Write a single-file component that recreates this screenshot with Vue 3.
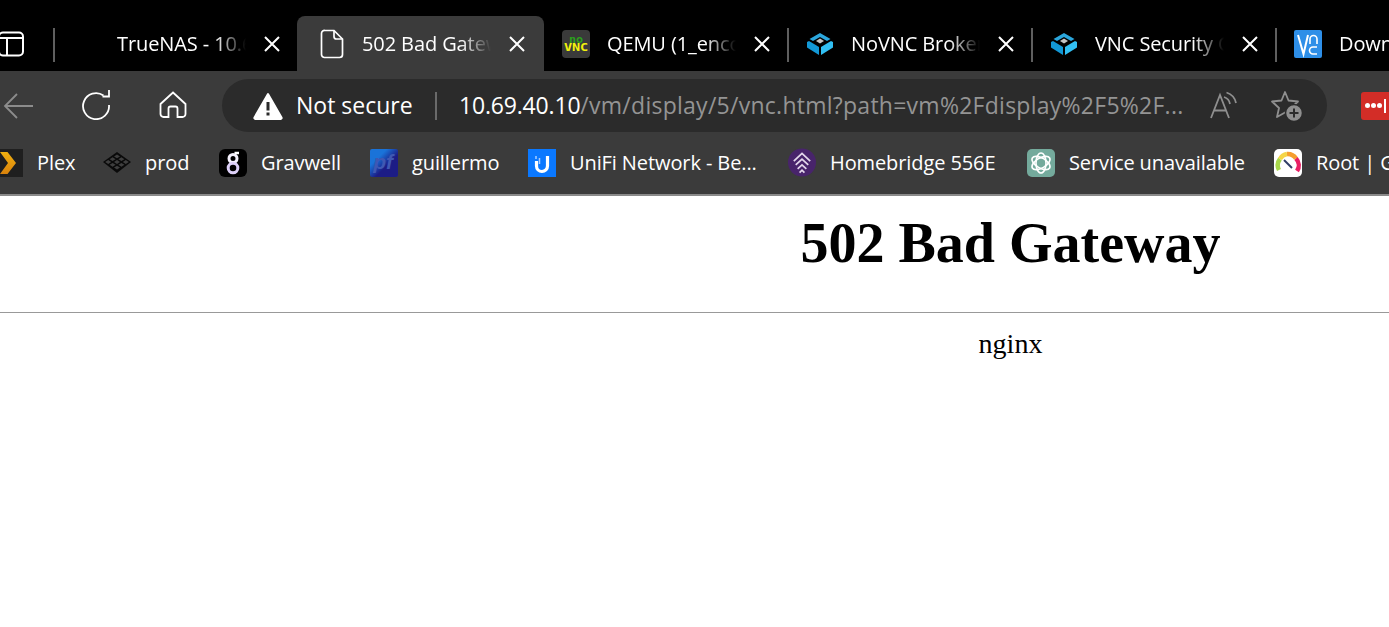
<script setup>
const tabs = [
  { key: 'truenas', title: 'TrueNAS - 10.69.40.10', icon: '', sep: true },
  { key: 'bad', title: '502 Bad Gateway', icon: 'doc', active: true },
  { key: 'qemu', title: 'QEMU (1_encoder)', icon: 'novnc' },
  { key: 'novnc', title: 'NoVNC Broken', icon: 'tn', sep: true },
  { key: 'sec', title: 'VNC Security Options', icon: 'tn', sep: true },
  { key: 'down', title: 'Downloads', icon: 'vc', sep: true },
]
const marks = [
  { label: 'Plex', icon: 'plex', width: 108 },
  { label: 'prod', icon: 'prod', width: 116 },
  { label: 'Gravwell', icon: 'grav', width: 151 },
  { label: 'guillermo', icon: 'pf', width: 158 },
  { label: 'UniFi Network - Be...', icon: 'unifi', width: 260 },
  { label: 'Homebridge 556E', icon: 'hb', width: 239 },
  { label: 'Service unavailable', icon: 'ai', width: 247 },
  { label: 'Root | Grafana', icon: 'root', width: 200 },
]
const prodCells = []
for (const i of [-1, 0, 1]) {
  for (const j of [-1, 0, 1]) {
    const cx = 14 + (i + j) * 4.4
    const cy = 13 + (i - j) * 2.8
    prodCells.push(`M${cx} ${cy - 1.9}L${cx + 3} ${cy}L${cx} ${cy + 1.9}L${cx - 3} ${cy}Z`)
  }
}
const prodPath = prodCells.join('')
</script>

<template>
  <div class="screen">
    <header class="chrome">
      <div class="tabstrip">
        <svg class="sidebar-ico" width="25" height="26" viewBox="0 0 25 26" fill="none" stroke="#fff" stroke-width="2">
          <rect x="-1" y="1.500" width="24" height="23" rx="4" />
          <path d="M-1 7H23M7 7V24" />
        </svg>
        <div v-for="t in tabs" :key="t.key" class="tab" :class="{ active: t.active, sep: t.sep }">
          <span class="fav">
            <svg v-if="t.icon === 'doc'" class="doc" width="24" height="30" viewBox="0 0 24 30" fill="none" stroke="#fff" stroke-width="1.700">
              <path d="M5 1.500H14L22.500 10V25.500A3 3 0 0 1 19.500 28.500H4.500A3 3 0 0 1 1.500 25.500V4.500A3 3 0 0 1 5 1.500Z" />
              <path d="M14 1.500V7.500A2.500 2.500 0 0 0 16.500 10H22.500" />
            </svg>
            <svg v-else-if="t.icon === 'novnc'" width="28" height="28" viewBox="0 0 28 28">
              <rect width="28" height="28" rx="4" fill="#3a3a3a" />
              <text x="7" y="12.500" class="nv nv-g" textLength="14" lengthAdjust="spacingAndGlyphs">no</text>
              <text x="2" y="21" class="nv nv-y" textLength="24" lengthAdjust="spacingAndGlyphs">VNC</text>
            </svg>
            <svg v-else-if="t.icon === 'tn'" width="28" height="28" viewBox="0 0 28 28">
              <path d="M14 3L24.500 9L21 11L14 7L7 11L3.500 9Z" fill="#2ba6dc" />
              <path d="M14 8.500L18 11L14 13.500L10 11Z" fill="#c4c4c4" />
              <path d="M1 12L3 11L13 17V25L1 17.500Z" fill="#1298d6" />
              <path d="M27 12L25 11L15 17V25L27 17.500Z" fill="#31bff3" />
            </svg>
            <svg v-else-if="t.icon === 'vc'" width="28" height="28" viewBox="0 0 28 28">
              <rect width="28" height="28" rx="2" fill="#2e8fe8" />
              <path d="M4 5L9.500 24L14 5" fill="none" stroke="#fff" stroke-width="2" />
              <path d="M16 14V9A3.500 3.500 0 0 1 23 9V14" fill="none" stroke="#fff" stroke-width="1.600" />
              <path d="M23 17H19A3.500 3.500 0 0 0 19 24H23" fill="none" stroke="#fff" stroke-width="1.600" />
            </svg>
          </span>
          <span class="tab-title">{{ t.title }}</span>
          <svg v-if="t.key !== 'down'" class="close" width="18" height="18" viewBox="0 0 18 18" stroke="#fff" stroke-width="2">
            <path d="M2 2L16 16M16 2L2 16" />
          </svg>
        </div>
      </div>

      <div class="toolbar">
        <svg class="tool back" width="30" height="28" viewBox="0 0 30 28" fill="none" stroke="#8c8c8c" stroke-width="1.800">
          <path d="M30 14H2M14 2L2 14L14 26" />
        </svg>
        <svg class="tool reload" width="30" height="30" viewBox="0 0 30 30" fill="none" stroke="#fff" stroke-width="1.800">
          <path d="M22.500 5.500A13 13 0 1 0 28 15" />
          <path d="M22 0V6.500H15.500" transform="translate(6 0)" />
        </svg>
        <svg class="tool home" width="28" height="28" viewBox="0 0 28 28" fill="none" stroke="#fff" stroke-width="1.800">
          <path d="M14 1.500L26.500 13V23A3 3 0 0 1 23.500 26H18.500V17.500A2 2 0 0 0 16.500 15.500H11.500A2 2 0 0 0 9.500 17.500V26H4.500A3 3 0 0 1 1.500 23V13Z" />
        </svg>
        <div class="omni">
          <svg class="warn" width="30" height="28" viewBox="0 0 30 28">
            <path d="M15 2L28.500 25.500A1 1 0 0 1 27.500 27H2.500A1 1 0 0 1 1.500 25.500Z" fill="#fff" stroke="#fff" stroke-linejoin="round" stroke-width="2" />
            <rect x="13.500" y="10" width="3" height="8.500" fill="#2b2b2b" />
            <rect x="13.500" y="20.500" width="3" height="3" fill="#2b2b2b" />
          </svg>
          <span class="secure">Not secure</span>
          <span class="omni-sep"></span>
          <span class="url"><b>10.69.40.10</b>/vm/display/5/vnc.html?path=vm%2Fdisplay%2F5%2F...</span>
          <svg class="aloud" width="28" height="30" viewBox="0 0 28 30" fill="none" stroke="#8f8f8f" stroke-width="1.800">
            <path d="M1 27L10 4L19 27M4 19.500H16" />
            <path d="M14 6A9 9 0 0 1 20 13M16.500 1.500A14 14 0 0 1 26 12" />
          </svg>
          <svg class="fav-add" width="32" height="32" viewBox="0 0 32 32" fill="none">
            <path d="M14 2L17.500 10.500L27 11.500L20 18L22 27L14 22.500L6 27L8 18L1 11.500L10.500 10.500Z" stroke="#8f8f8f" stroke-width="1.800" stroke-linejoin="round" />
            <circle cx="23" cy="23" r="8.500" fill="#8f8f8f" stroke="#2b2b2b" stroke-width="1.500" />
            <path d="M23 18.500V27.500M18.500 23H27.500" stroke="#2b2b2b" stroke-width="2" />
          </svg>
        </div>
        <div class="lastpass"><i></i><i></i><i></i><u></u></div>
      </div>

      <nav class="bookmarks">
        <div v-for="m in marks" :key="m.label" class="mark" :style="{ width: m.width + 'px' }">
          <span class="mark-ico">
            <svg v-if="m.icon === 'plex'" width="28" height="28" viewBox="0 0 28 28">
              <defs>
                <linearGradient id="plexg" x1="0" y1="0" x2="0" y2="1">
                  <stop offset="0" stop-color="#f0b010" />
                  <stop offset="1" stop-color="#d9820c" />
                </linearGradient>
              </defs>
              <rect width="28" height="28" fill="#1f1f1f" />
              <path d="M5 3H12.500L21 14L12.500 25H5L13 14Z" fill="url(#plexg)" />
            </svg>
            <svg v-else-if="m.icon === 'prod'" width="28" height="28" viewBox="0 0 28 28">
              <path d="M14 3L28 13L14 24L0 13Z" fill="#0a0a0a" />
              <path :d="prodPath" fill="#3f3f3f" />
            </svg>
            <svg v-else-if="m.icon === 'grav'" width="28" height="28" viewBox="0 0 28 28" fill="none">
              <rect width="28" height="28" rx="6" fill="#000" />
              <circle cx="14" cy="9.500" r="4" stroke="#f5f1fd" stroke-width="3" />
              <circle cx="14" cy="19" r="4.800" stroke="#dccff7" stroke-width="3" />
              <path d="M15.500 4H20" stroke="#fff" stroke-width="2.500" />
            </svg>
            <svg v-else-if="m.icon === 'pf'" width="28" height="28" viewBox="0 0 28 28">
              <defs>
                <linearGradient id="pfg" x1="0" y1="0" x2="1" y2="1">
                  <stop offset="0.300" stop-color="#1a73d9" />
                  <stop offset="0.600" stop-color="#1c1c85" />
                </linearGradient>
              </defs>
              <rect width="28" height="28" rx="2" fill="url(#pfg)" />
              <text x="13" y="20" class="pf">pf</text>
            </svg>
            <svg v-else-if="m.icon === 'unifi'" width="28" height="28" viewBox="0 0 28 28" fill="none">
              <rect width="28" height="28" fill="#0a78ff" />
              <path d="M8.500 12V17A5.500 5.500 0 0 0 19.500 17V7" stroke="#fff" stroke-width="3.200" />
              <path d="M8 7V10M11.500 9V15" stroke="#a9cdff" stroke-width="1.500" />
            </svg>
            <svg v-else-if="m.icon === 'hb'" width="29" height="29" viewBox="0 0 29 29" fill="none">
              <circle cx="14.500" cy="14.500" r="14.500" fill="#48246b" />
              <path d="M6 13L14.500 5L23 13M8 17L14.500 11L21 17M10 21L14.500 17L19 21M12 25L14.500 22.500L17 25" stroke="#e4d8ec" stroke-width="1.800" />
            </svg>
            <svg v-else-if="m.icon === 'ai'" width="28" height="28" viewBox="0 0 28 28" fill="none">
              <rect width="28" height="28" rx="5" fill="#74aa9c" />
              <g stroke="#fff" stroke-width="1.600">
                <ellipse cx="14" cy="14" rx="5" ry="10" />
                <ellipse cx="14" cy="14" rx="5" ry="10" transform="rotate(60 14 14)" />
                <ellipse cx="14" cy="14" rx="5" ry="10" transform="rotate(120 14 14)" />
              </g>
            </svg>
            <svg v-else-if="m.icon === 'root'" width="28" height="28" viewBox="0 0 28 28" fill="none">
              <rect width="28" height="28" rx="5" fill="#fff" />
              <path d="M5 21A10 10 0 0 1 6 10" stroke="#a8d84a" stroke-width="4.500" />
              <path d="M6 10A10 10 0 0 1 13 5" stroke="#f5d547" stroke-width="4.500" />
              <path d="M13 5A10 10 0 0 1 22 9.500" stroke="#f59e2e" stroke-width="4.500" />
              <path d="M22 9.500A10 10 0 0 1 23 22" stroke="#e91e63" stroke-width="4.500" />
              <path d="M10 11L18 19" stroke="#2f3d66" stroke-width="2" />
            </svg>
          </span>
          <span class="mark-label">{{ m.label }}</span>
        </div>
      </nav>
    </header>

    <main class="page">
      <h1>502 Bad Gateway</h1>
      <hr />
      <p>nginx</p>
    </main>
  </div>
</template>

<style scoped>
.screen {
  width: 1389px;
  height: 627px;
  overflow: hidden;
  background: #fff;
  font-family: "Open Sans", "Noto Sans", sans-serif;
}
.chrome {
  background: #3b3b3b;
  color: #fff;
}
.tabstrip {
  display: flex;
  align-items: flex-end;
  height: 71px;
  padding-top: 16px;
  box-sizing: border-box;
  background: #000;
  overflow: hidden;
}
.sidebar-ico {
  flex: none;
  width: 25px;
  margin: 0 28px 14px 0;
}
.tab {
  flex: none;
  display: flex;
  align-items: center;
  position: relative;
  width: 244px;
  height: 55px;
  padding: 0 17px 0 19px;
  box-sizing: border-box;
  font-size: 20px;
  letter-spacing: -0.1px;
}
.tab.active {
  width: 247px;
  margin-right: -1px;
  padding-left: 20px;
  background: #3b3b3b;
  border-radius: 8px 8px 0 0;
}
.tab.sep::before {
  content: "";
  position: absolute;
  left: 0;
  top: 12px;
  height: 34px;
  width: 2px;
  background: #5f5f5f;
}
.fav {
  flex: none;
  display: flex;
  align-items: center;
  width: 28px;
  height: 28px;
  margin-right: 17px;
}
.doc {
  flex: none;
  margin-left: 3px;
}
.tab-title {
  flex: none;
  width: 136px;
  overflow: hidden;
  white-space: nowrap;
  -webkit-mask-image: linear-gradient(to right, #000 98px, transparent 129px);
  mask-image: linear-gradient(to right, #000 98px, transparent 129px);
}
.close {
  flex: none;
  margin-left: 10px;
}
.nv {
  font-family: "DejaVu Sans Mono", monospace;
  font-weight: 700;
  font-size: 10px;
}
.nv-g { fill: #2c9e1d; }
.nv-y { fill: #f2f20d; }
.pf {
  font-family: "Liberation Sans", sans-serif;
  font-size: 21px;
  font-style: italic;
  font-weight: 700;
  text-anchor: middle;
  fill: #3f58b4;
}
.toolbar {
  display: flex;
  align-items: center;
  height: 66px;
  box-sizing: border-box;
  padding-top: 3px;
}
.tool {
  flex: none;
}
.back { margin-left: 3px; }
.reload { margin-left: 48px; margin-bottom: 1px; }
.home { margin-left: 48px; margin-bottom: 1px; }
.omni {
  flex: none;
  display: flex;
  align-items: center;
  width: 1105px;
  height: 53px;
  margin-left: 35px;
  padding-left: 31px;
  box-sizing: border-box;
  border-radius: 27px;
  background: #2b2b2b;
}
.warn { flex: none; }
.secure {
  flex: none;
  width: 117px;
  margin: 0 0 2px 13px;
  font-size: 23px;
  white-space: nowrap;
}
.omni-sep {
  flex: none;
  width: 2px;
  height: 28px;
  margin-left: 22px;
  background: #6a6a6a;
}
.url {
  flex: none;
  width: 726px;
  margin: 0 0 2px 22px;
  font-size: 23px;
  letter-spacing: 0.26px;
  white-space: nowrap;
  overflow: hidden;
  color: #949494;
}
.url b {
  font-weight: 400;
  letter-spacing: -0.18px;
  color: #fff;
}
.aloud {
  flex: none;
  margin-left: 25px;
}
.fav-add {
  flex: none;
  margin-left: 33px;
}
.lastpass {
  flex: none;
  display: flex;
  align-items: center;
  gap: 1px;
  width: 60px;
  height: 28px;
  margin-left: 34px;
  padding-left: 4px;
  box-sizing: border-box;
  border-radius: 3px;
  background: #d32d27;
}
.lastpass i {
  width: 5px;
  height: 5px;
  border-radius: 50%;
  background: #fff;
}
.lastpass u {
  width: 2px;
  height: 14px;
  margin-left: 1px;
  background: #fff;
}
.bookmarks {
  display: flex;
  align-items: center;
  height: 51px;
  margin-left: -5px;
  padding-bottom: 6px;
  box-sizing: content-box;
  overflow: hidden;
  border-bottom: 2px solid #8a8a8a;
}
.mark {
  flex: none;
  display: flex;
  align-items: center;
  font-size: 20px;
  letter-spacing: -0.1px;
  white-space: nowrap;
}
.mark-ico {
  flex: none;
  display: flex;
  justify-content: center;
  width: 28px;
  margin-right: 14px;
}
.page {
  width: 2021px;
  font-family: "Liberation Serif", serif;
  color: #000;
  text-align: center;
  font-size: 28px;
}
h1 {
  margin: 15px 0 37px;
  font-size: 56px;
  line-height: 64px;
}
hr {
  margin: 0;
  border: 0;
  height: 1px;
  background: #999;
}
p {
  margin: 15px 0 0;
  line-height: 32px;
}
</style>
